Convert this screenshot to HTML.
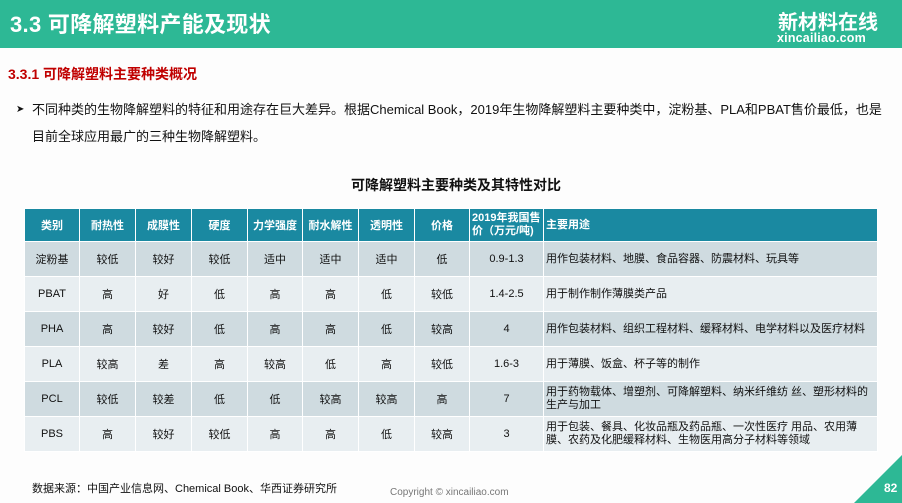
<!DOCTYPE html>
<html><head><meta charset="utf-8"><style>
body{margin:0;width:902px;height:503px;background:#fdfdfd;position:relative;overflow:hidden;font-family:"Liberation Sans","Noto Sans CJK SC",sans-serif;color:#111}
.hd{position:absolute;left:0;top:0;width:902px;height:48px;background:#2db895}
.hd h1{position:absolute;left:10px;top:7px;margin:0;font-size:22px;font-weight:bold;color:#fff;letter-spacing:0.3px}
.logo{position:absolute;left:778px;top:6px;color:#fff;font-weight:bold;font-size:20px;letter-spacing:0px}
.logo2{position:absolute;left:777px;top:31px;color:#fff;font-size:12.5px;font-weight:bold;letter-spacing:0.2px}
.sub{position:absolute;left:8px;top:64px;font-size:14px;font-weight:bold;color:#c00000}
.p{position:absolute;left:16px;top:96px;font-size:13px;line-height:27px;width:875px}
.p span{position:absolute;left:0;top:0;font-size:10px}
.p div{margin-left:16px}
.tt{position:absolute;left:0;width:902px;top:175px;text-align:center;font-size:14px;font-weight:bold;padding-left:10px;box-sizing:border-box}
table{position:absolute;left:24px;top:208px;border-collapse:collapse;font-size:11px;table-layout:fixed}
td{border:1px solid #fff;text-align:center;padding:0;height:34px}
tr.h td{background:#1a89a1;color:#fff;font-weight:bold;height:32px}
tr.a td{background:#cfdbe0}
tr.b td{background:#e8eef1}
td.l{text-align:left;padding-left:2px;line-height:13px}
.src{position:absolute;left:32px;top:480px;font-size:11px}
.cp{position:absolute;left:390px;top:487px;font-size:10px;color:#777}
.tri{position:absolute;right:0;bottom:0;width:0;height:0;border-left:48px solid transparent;border-bottom:48px solid #2db895}
.pg{position:absolute;left:884px;top:481px;font-size:12px;font-weight:bold;color:#fff}
</style></head><body>
<div class="hd"><h1>3.3 可降解塑料产能及现状</h1><div class="logo">新材料在线</div><div class="logo2">xincailiao.com</div></div>
<div class="sub">3.3.1 可降解塑料主要种类概况</div>
<div class="p"><span>➤</span><div>不同种类的生物降解塑料的特征和用途存在巨大差异。根据Chemical Book，2019年生物降解塑料主要种类中，淀粉基、PLA和PBAT售价最低，也是目前全球应用最广的三种生物降解塑料。</div></div>
<div class="tt">可降解塑料主要种类及其特性对比</div>
<table>
<colgroup><col style="width:55px"><col style="width:56px"><col style="width:56px"><col style="width:56px"><col style="width:55px"><col style="width:56px"><col style="width:56px"><col style="width:55px"><col style="width:74px"><col style="width:334px"></colgroup>
<tr class="h"><td>类别</td><td>耐热性</td><td>成膜性</td><td>硬度</td><td>力学强度</td><td>耐水解性</td><td>透明性</td><td>价格</td><td class="l">2019年我国售价（万元/吨)</td><td class="l">主要用途</td></tr>
<tr class="a"><td>淀粉基</td><td>较低</td><td>较好</td><td>较低</td><td>适中</td><td>适中</td><td>适中</td><td>低</td><td>0.9-1.3</td><td class="l">用作包装材料、地膜、食品容器、防震材料、玩具等</td></tr>
<tr class="b"><td>PBAT</td><td>高</td><td>好</td><td>低</td><td>高</td><td>高</td><td>低</td><td>较低</td><td>1.4-2.5</td><td class="l">用于制作制作薄膜类产品</td></tr>
<tr class="a"><td>PHA</td><td>高</td><td>较好</td><td>低</td><td>高</td><td>高</td><td>低</td><td>较高</td><td>4</td><td class="l">用作包装材料、组织工程材料、缓释材料、电学材料以及医疗材料</td></tr>
<tr class="b"><td>PLA</td><td>较高</td><td>差</td><td>高</td><td>较高</td><td>低</td><td>高</td><td>较低</td><td>1.6-3</td><td class="l">用于薄膜、饭盒、杯子等的制作</td></tr>
<tr class="a"><td>PCL</td><td>较低</td><td>较差</td><td>低</td><td>低</td><td>较高</td><td>较高</td><td>高</td><td>7</td><td class="l">用于药物载体、增塑剂、可降解塑料、纳米纤维纺 丝、塑形材料的生产与加工</td></tr>
<tr class="b"><td>PBS</td><td>高</td><td>较好</td><td>较低</td><td>高</td><td>高</td><td>低</td><td>较高</td><td>3</td><td class="l">用于包装、餐具、化妆品瓶及药品瓶、一次性医疗 用品、农用薄膜、农药及化肥缓释材料、生物医用高分子材料等领域</td></tr>
</table>
<div class="src">数据来源：中国产业信息网、Chemical Book、华西证券研究所</div>
<div class="cp">Copyright © xincailiao.com</div>
<div class="tri"></div><div class="pg">82</div>
</body></html>
